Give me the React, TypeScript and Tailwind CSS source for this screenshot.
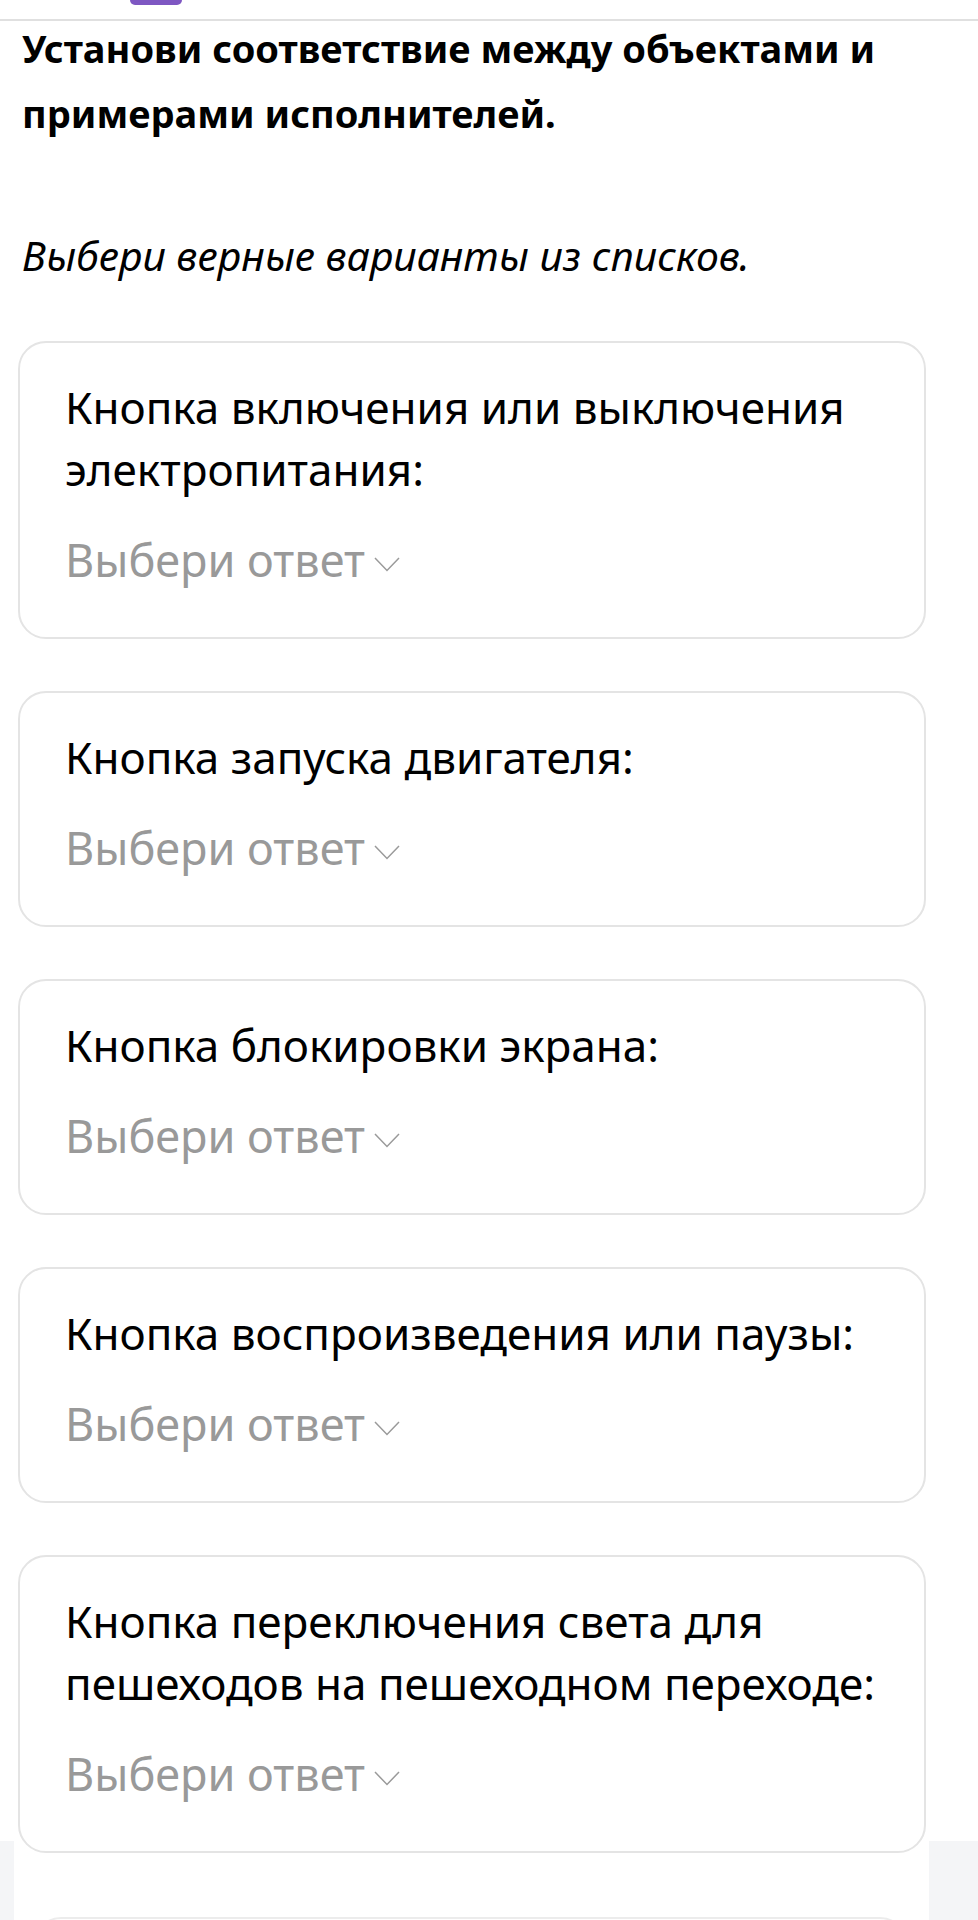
import React from 'react';

// Список вопросов с выпадающими ответами
const items: string[] = [
  'Кнопка включения или выключения электропитания:',
  'Кнопка запуска двигателя:',
  'Кнопка блокировки экрана:',
  'Кнопка воспроизведения или паузы:',
  'Кнопка переключения света для пешеходов на пешеходном переходе:',
];

const Chevron: React.FC = () => (
  <svg width="26" height="15" viewBox="0 0 26 15" className="inline-block align-middle ml-[9px]">
    <polyline points="1,1 13,13.5 25,1" fill="none" stroke="#9a9a9a" strokeWidth="1.5" />
  </svg>
);

const QuestionCard: React.FC<{ text: string }> = ({ text }) => (
  <div className="relative z-10 bg-white border-2 border-[#e4e4e4] rounded-[28px] pl-[45px] pr-[45px] pt-[33px] pb-[46px]">
    <p className="text-[44px] leading-[62px] text-black">{text}</p>
    <div className="mt-[29px] text-[45px] leading-[62px] text-[#999999]">
      Выбери ответ
      <Chevron />
    </div>
  </div>
);

export default function App() {
  return (
    <div className="w-[978px] h-[1920px] bg-white font-['Noto_Sans',sans-serif] overflow-hidden">
      {/* Верхняя панель */}
      <div className="h-[21px] border-b-2 border-[#e0e0e0]">
        <div className="ml-[130px] w-[52px] h-[5px] rounded-b-full bg-[#7e57c2]" />
      </div>

      <h1 className="mt-[-5px] px-[22px] text-[38px] leading-[65px] font-bold text-black">
        Установи соответствие между объектами и примерами исполнителей.
      </h1>

      <p className="mt-[83px] px-[22px] text-[41px] leading-[53px] italic text-black">
        Выбери верные варианты из списков.
      </p>

      <div className="mt-[59px] ml-[18px] w-[908px] flex flex-col gap-[52px]">
        {items.map((t) => (
          <QuestionCard key={t} text={t} />
        ))}
      </div>

      {/* Нижний блок */}
      <div className="mt-[-12px] bg-[#f4f5f7] pl-[14px]">
        <div className="w-[915px] bg-white pt-[76px] pl-[19px] pr-[21px] h-[200px]">
          <div className="h-[120px] border-2 border-[#ececec] rounded-[28px]" />
        </div>
      </div>
    </div>
  );
}
